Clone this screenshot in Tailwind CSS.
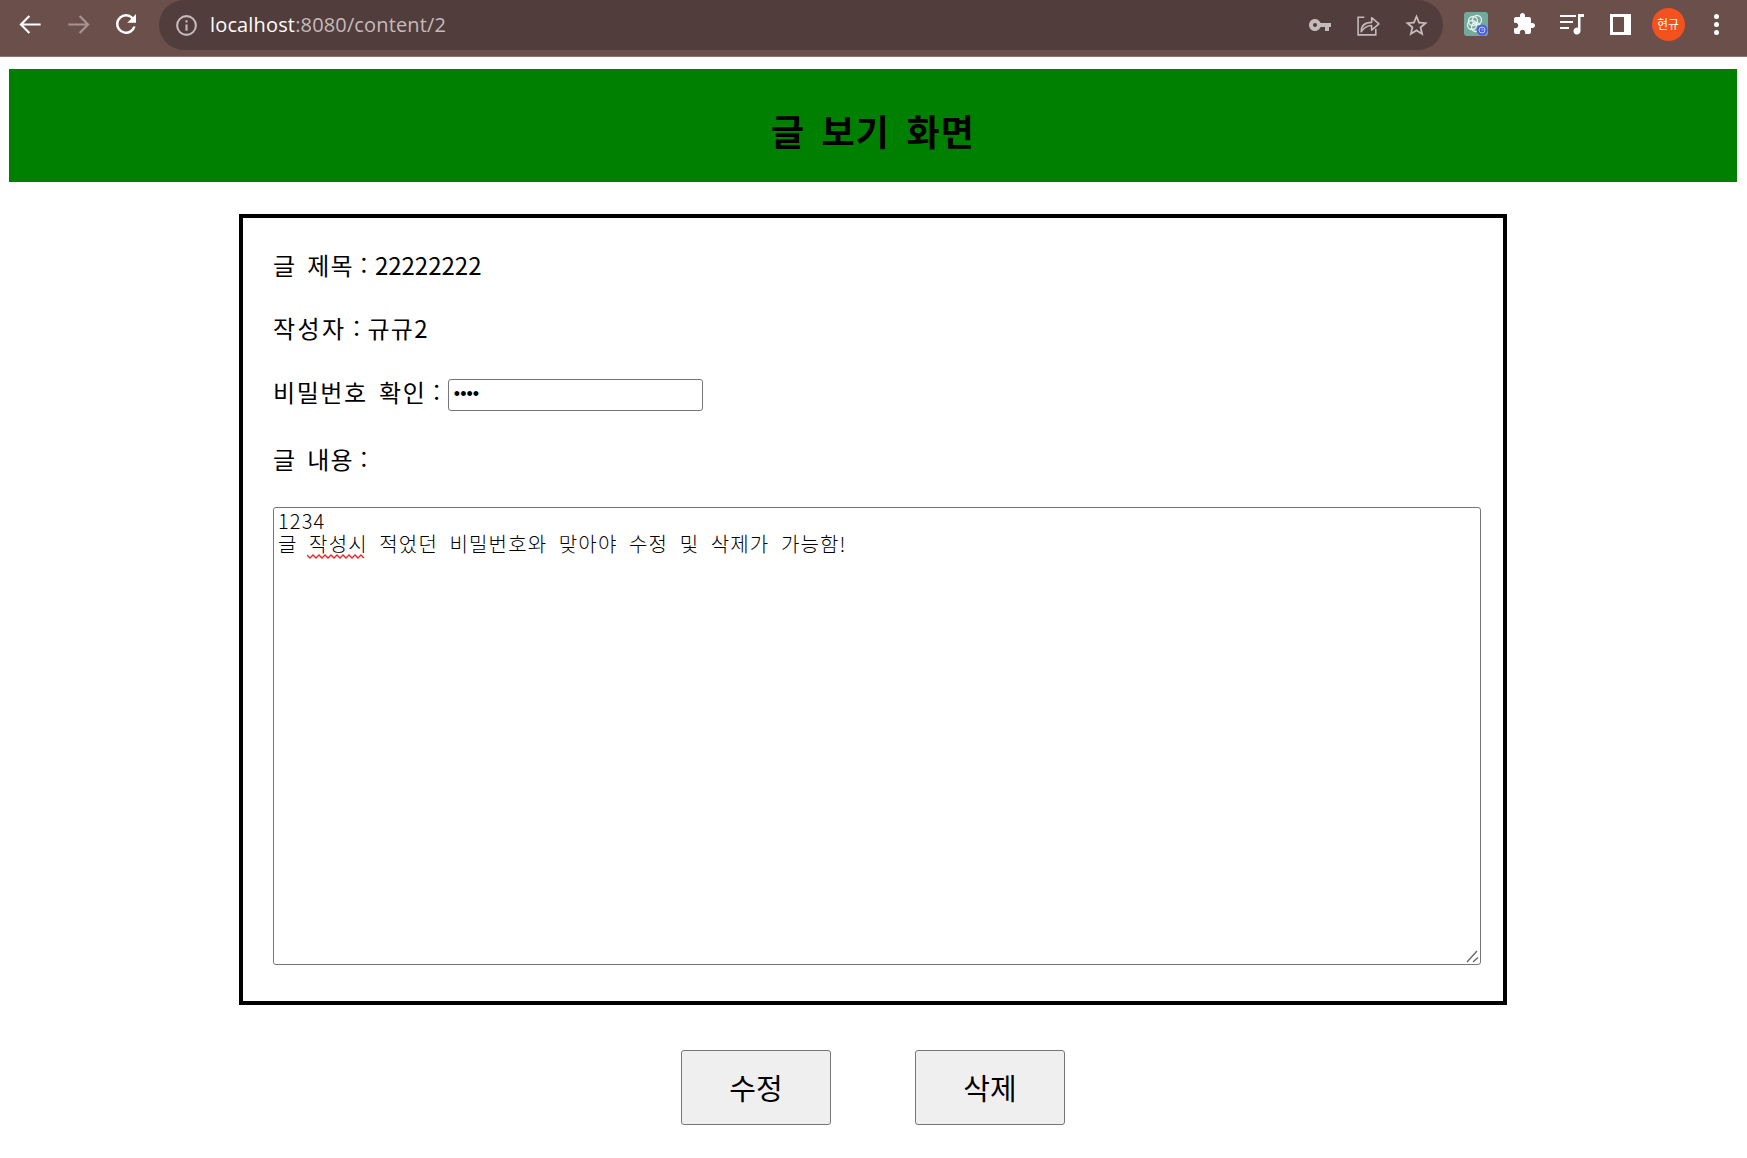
<!DOCTYPE html>
<html lang="ko">
<head>
    <meta charset="UTF-8">
    <meta name="viewport" content="width=device-width, initial-scale=1.0">
    <title>글 보기 화면</title>
    <script src="https://cdn.jsdelivr.net/npm/@tailwindcss/browser@4"></script>
</head>
<body class="bg-white text-black h-[1158px] overflow-hidden font-['Noto_Sans_CJK_KR',sans-serif]">
    <!-- Browser toolbar -->
    <div class="h-[57px] bg-[#6b4f4b] border-b border-[#8a7470] flex items-start pl-[6px] pr-[7px]">
        <div class="w-12 h-12 flex items-center justify-center">
            <svg width="27" height="27" viewBox="0 0 24 24" fill="none" stroke="#fff" stroke-width="1.900"><path d="M21 12H4M11 4.500L3.500 12l7.500 7.500"/></svg>
        </div>
        <div class="w-12 h-12 flex items-center justify-center">
            <svg width="27" height="27" viewBox="0 0 24 24" fill="none" stroke="#a69592" stroke-width="1.900"><path d="M3 12h17M13 4.500l7.500 7.500-7.500 7.500"/></svg>
        </div>
        <div class="w-12 h-12 flex items-center justify-center">
            <svg width="30" height="30" viewBox="0 0 24 24" fill="#fff"><path d="M17.650 6.350A7.960 7.960 0 0 0 12 4a8 8 0 1 0 7.730 10h-2.080A6 6 0 1 1 12 6c1.660 0 3.140.690 4.220 1.780L13 11h7V4l-2.350 2.350z"/></svg>
        </div>
        <!-- Address bar -->
        <div class="ml-[9px] flex-1 h-[50px] bg-[#523d3d] rounded-[25px] flex items-center pl-[15px] pr-[3px]">
            <svg width="25" height="25" viewBox="0 0 24 24" fill="none" stroke="#c3bbba" stroke-width="2"><circle cx="12" cy="12" r="9"/><path d="M12 11v6M12 7v2"/></svg>
            <div class="ml-[11px] flex-1 text-[20px] text-[#c3bbba] font-['Open_Sans',sans-serif] tracking-[0.15px]"><span class="text-white">localhost</span>:8080/content/2</div>
            <div class="w-12 h-12 flex items-center justify-center">
                <svg width="24" height="24" viewBox="0 0 24 24" fill="#c3bbba"><path d="M12.650 10C11.830 7.670 9.610 6 7 6c-3.310 0-6 2.690-6 6s2.690 6 6 6c2.610 0 4.830-1.670 5.650-4H17v4h4v-4h2v-4H12.650zM7 14c-1.100 0-2-.9-2-2s.9-2 2-2 2 .9 2 2-.9 2-2 2z"/></svg>
            </div>
            <div class="w-12 h-12 flex items-center justify-center">
                <svg width="25" height="25" viewBox="0 0 24 24" fill="none" stroke="#c3bbba" stroke-width="1.500"><path d="M8 4H2v17h17v-6"/><path d="M5 18c0-6 4-9 10-9V4.500l7 6-7 6v-4.500c-4 0-7 1.500-10 6z" stroke-linejoin="round"/></svg>
            </div>
            <div class="w-12 h-12 flex items-center justify-center">
                <svg width="27" height="27" viewBox="0 0 24 24" fill="#c3bbba"><path d="M22 9.240l-7.190-.62L12 2 9.190 8.630 2 9.240l5.460 4.730L5.820 21 12 17.270 18.180 21l-1.630-7.030L22 9.240zM12 15.400l-3.760 2.270 1-4.280-3.320-2.880 4.380-.38L12 6.100l1.710 4.040 4.380.38-3.320 2.880 1 4.280L12 15.400z"/></svg>
            </div>
        </div>
        <!-- Extensions -->
        <div class="ml-[9px] w-12 h-12 flex items-center justify-center">
            <div class="relative w-6 h-6 bg-[#74aa9c] rounded-[3px]">
                <svg width="24" height="24" viewBox="0 0 24 24" fill="none" stroke="#e6f1ee" stroke-width="1.300"><circle cx="9" cy="9" r="4.500"/><circle cx="13" cy="8" r="4.500"/><circle cx="8" cy="13" r="4.500"/><circle cx="12" cy="15" r="4.500"/></svg>
                <svg class="absolute right-0 bottom-0" width="12" height="12" viewBox="0 0 12 12" fill="none"><circle cx="6" cy="6" r="5.500" fill="#4a5fe0"/><circle cx="6" cy="6" r="3" stroke="#c5ccf7"/><path d="M6 4.500V6h1.500" stroke="#c5ccf7" stroke-width=".8"/></svg>
            </div>
        </div>
        <div class="w-12 h-12 flex items-center justify-center">
            <svg width="24" height="24" viewBox="0 0 24 24" fill="#fff"><path d="M20.500 11H19V7c0-1.100-.9-2-2-2h-4V3.500C13 2.120 11.880 1 10.500 1S8 2.120 8 3.500V5H4c-1.100 0-1.990.9-1.990 2v3.800H3.500c1.490 0 2.700 1.210 2.700 2.700s-1.210 2.700-2.700 2.700H2V20c0 1.100.9 2 2 2h3.800v-1.500c0-1.490 1.210-2.700 2.700-2.700 1.490 0 2.700 1.210 2.700 2.700V22H17c1.100 0 2-.9 2-2v-4h1.500c1.380 0 2.500-1.120 2.500-2.500S21.880 11 20.500 11z"/></svg>
        </div>
        <div class="w-12 h-12 flex items-center justify-center">
            <svg width="24" height="24" viewBox="0 0 24 24" fill="#fff"><path d="M0 3h16v2H0zM0 9h13v2H0zM0 15h9v2H0z"/><path d="M18 2h6v3h-3.500v14a3.500 3.500 0 1 1-2.500-3.300V2z"/></svg>
        </div>
        <div class="w-12 h-12 flex items-center justify-center">
            <div class="w-[21px] h-[21px] border-[3px] border-white border-r-[7px]"></div>
        </div>
        <div class="w-12 h-12 flex items-center justify-center">
            <div class="w-[33px] h-[33px] rounded-full bg-[#f4511e] text-white text-[12px] flex items-center justify-center">현규</div>
        </div>
        <div class="w-12 h-12 flex flex-col items-center justify-center gap-[3px]">
            <div class="w-[5px] h-[5px] rounded-full bg-white"></div>
            <div class="w-[5px] h-[5px] rounded-full bg-white"></div>
            <div class="w-[5px] h-[5px] rounded-full bg-white"></div>
        </div>
    </div>

    <div class="w-[1728px] ml-[9px] pt-3">
        <!-- Title banner -->
        <div class="h-[113px] bg-[#008000] flex items-center justify-center pt-2">
            <h1 class="text-[36px] font-bold leading-none tracking-[1.200px] [word-spacing:5px]">글 보기 화면</h1>
        </div>

        <!-- Post box -->
        <div class="relative w-[1268px] h-[791px] mx-auto mt-8 border-4 border-black px-[30px] pt-[31px] text-[24px]">
            <div class="h-8 flex items-center whitespace-pre"><span class="tracking-[1.200px] [word-spacing:3px]">글 제목</span> : <span class="ml-px">22222222</span></div>
            <div class="h-8 mt-[31px] flex items-center whitespace-pre"><span class="tracking-[2.400px]">작성자</span> : <span class="ml-px tracking-[1.200px]">규규</span>2</div>
            <div class="h-8 mt-[35px] flex items-center whitespace-pre">
                <span class="mb-[7px]"><span class="tracking-[1.600px] [word-spacing:3px]">비밀번호 확인</span> :</span>
                <input type="password" value="1234" class="ml-2 w-[255px] h-8 border border-[#767676] rounded-[3px] pl-[5px] pb-[2px] text-[18px] font-['Liberation_Sans',sans-serif] outline-none">
            </div>
            <div class="h-8 mt-[33px] flex items-center whitespace-pre"><span class="mb-[2px] tracking-[1.200px] [word-spacing:3px]">글 내용<span class="tracking-normal [word-spacing:0px]"> :</span></span></div>
            <textarea class="block w-[1208px] h-[458px] mt-[31px] border border-[#767676] rounded-[3px] px-1 py-[1px] text-[20px] leading-[23px] font-light tracking-[1.150px] [word-spacing:4.800px] resize-none outline-none">1234
글 작성시 적었던 비밀번호와 맞아야 수정 및 삭제가 가능함!</textarea>
            <!-- spellcheck squiggle -->
            <svg class="absolute left-[64px] top-[335px]" width="60" height="6" viewBox="0 0 60 6" fill="none" stroke="#e8272b" stroke-width="1.400"><path d="M0 2l3 3 3-3 3 3 3-3 3 3 3-3 3 3 3-3 3 3 3-3 3 3 3-3 3 3 3-3 3 3 3-3 3 3 3-3 3 3"/></svg>
            <!-- resize grip -->
            <svg class="absolute left-[1222px] top-[731px]" width="14" height="14" viewBox="0 0 14 14" fill="none" stroke="#666" stroke-width="1.300"><path d="M2 13L12 2M8 13l5-4.500"/></svg>
        </div>

        <!-- Buttons -->
        <div class="flex justify-center gap-[84px] mt-[45px]">
            <button class="w-[150px] h-[75px] bg-[#efefef] border border-[#767676] rounded-[3px] text-[29px]">수정</button>
            <button class="w-[150px] h-[75px] bg-[#efefef] border border-[#767676] rounded-[3px] text-[29px]">삭제</button>
        </div>
    </div>
</body>
</html>
